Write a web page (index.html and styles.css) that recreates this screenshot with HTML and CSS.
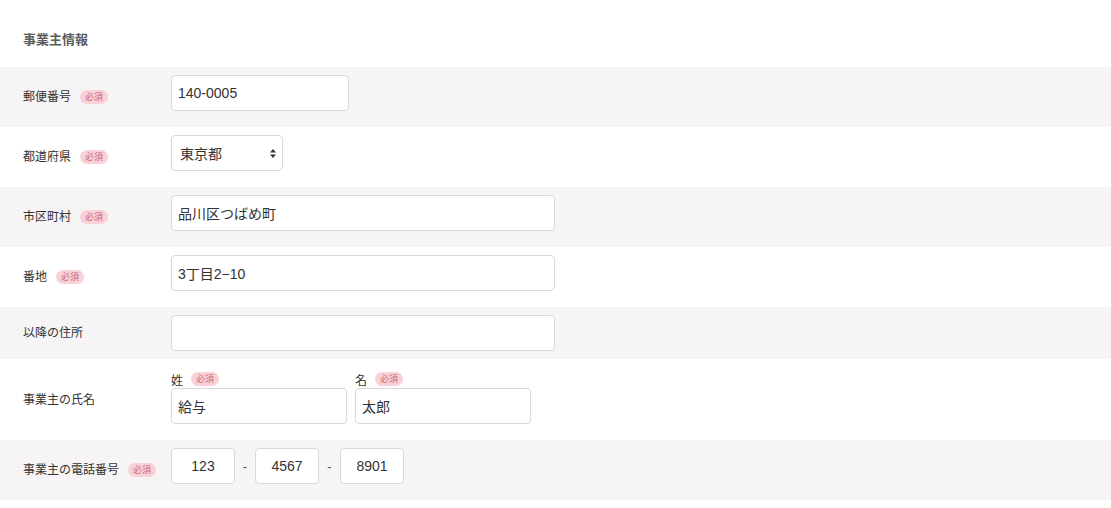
FILE: index.html
```html
<!DOCTYPE html>
<html lang="ja">
<head>
<meta charset="utf-8">
<link rel="stylesheet" href="styles.css">
</head>
<body>
<div class="form">
  <h2 class="title">事業主情報</h2>
  <div class="row gray">
    <div class="label">郵便番号<span class="req">必須</span></div>
    <div class="field"><input class="input w178" type="text" value="140-0005"></div>
  </div>
  <div class="row">
    <div class="label">都道府県<span class="req">必須</span></div>
    <div class="field">
      <div class="select">
        <span>東京都</span>
        <svg class="arrows" width="6" height="9" viewBox="0 0 6 9"><path d="M3 0L6 3.5H0Z M3 9L6 5.5H0Z" fill="#333"/></svg>
      </div>
    </div>
  </div>
  <div class="row gray">
    <div class="label">市区町村<span class="req">必須</span></div>
    <div class="field"><input class="input w384" type="text" value="品川区つばめ町"></div>
  </div>
  <div class="row">
    <div class="label">番地<span class="req">必須</span></div>
    <div class="field"><input class="input w384" type="text" value="3丁目2−10"></div>
  </div>
  <div class="row gray short">
    <div class="label">以降の住所</div>
    <div class="field"><input class="input w384" type="text" value=""></div>
  </div>
  <div class="row">
    <div class="label">事業主の氏名</div>
    <div class="field names">
      <div class="name">
        <div class="sublabel">姓<span class="req">必須</span></div>
        <input class="input w176" type="text" value="給与">
      </div>
      <div class="name">
        <div class="sublabel">名<span class="req">必須</span></div>
        <input class="input w176" type="text" value="太郎">
      </div>
    </div>
  </div>
  <div class="row gray">
    <div class="label">事業主の電話番号<span class="req">必須</span></div>
    <div class="field phone">
      <input class="input w64 center" type="text" value="123">
      <span class="dash">-</span>
      <input class="input w64 center" type="text" value="4567">
      <span class="dash wide">-</span>
      <input class="input w64 center" type="text" value="8901">
    </div>
  </div>
</div>
</body>
</html>
```

FILE: styles.css
```css
* { box-sizing: border-box; }
html, body { margin: 0; padding: 0; background: #fff; }
body {
  font-family: "Liberation Sans", "Noto Sans CJK JP", sans-serif;
  color: #333;
  font-size: 12px;
}
.form { width: 1111px; }
.title {
  margin: 0;
  padding: 31px 0 0 23px;
  height: 67px;
  font-size: 13px;
  font-weight: bold;
  color: #5a5a5a;
  line-height: 18px;
}
.row {
  display: flex;
  align-items: center;
  min-height: 60px;
}
.row.gray { background: #f6f4f4; }
.row.short { min-height: 52px; }
.label {
  width: 171px;
  padding-left: 23px;
  display: flex;
  align-items: center;
  font-size: 12px;
  line-height: 16px;
  color: #333;
  flex-shrink: 0;
}
.req {
  display: inline-block;
  margin-left: 9px;
  padding: 0 5px;
  height: 14px;
  line-height: 14px;
  border-radius: 7px;
  background: #f9d2d8;
  color: #c96b7a;
  font-size: 9px;
}
.field {
  align-self: flex-start;
  padding: 8px 0 16px;
  display: flex;
}
.row.short .field { padding-bottom: 8px; }
.input {
  height: 36px;
  border: 1px solid #d9d9d9;
  border-radius: 4px;
  background: #fff;
  padding: 0 7px 0 6px;
  font-family: "Liberation Sans", "Noto Sans CJK JP", sans-serif;
  font-size: 14px;
  color: #333;
  outline: none;
  margin: 0;
}
.w178 { width: 178px; }
.w384 { width: 384px; }
.w176 { width: 176px; }
.w64 { width: 64px; }
.center { text-align: center; padding: 0 4px; }
.select {
  width: 112px;
  height: 36px;
  border: 1px solid #d9d9d9;
  border-radius: 4px;
  background: #fff;
  display: flex;
  align-items: center;
  justify-content: space-between;
  padding: 0 6px 0 8px;
  font-size: 14px;
}
.arrows { display: block; }
.names { gap: 8px; padding-top: 11px; }
.name { display: flex; flex-direction: column; }
.sublabel {
  display: flex;
  align-items: center;
  height: 18px;
  font-size: 12px;
}
.sublabel .req { margin-left: 8px; }
.phone { align-items: center; }
.dash {
  width: 20px;
  text-align: center;
  font-size: 13px;
  color: #555;
}
.dash.wide { width: 21px; }
```
